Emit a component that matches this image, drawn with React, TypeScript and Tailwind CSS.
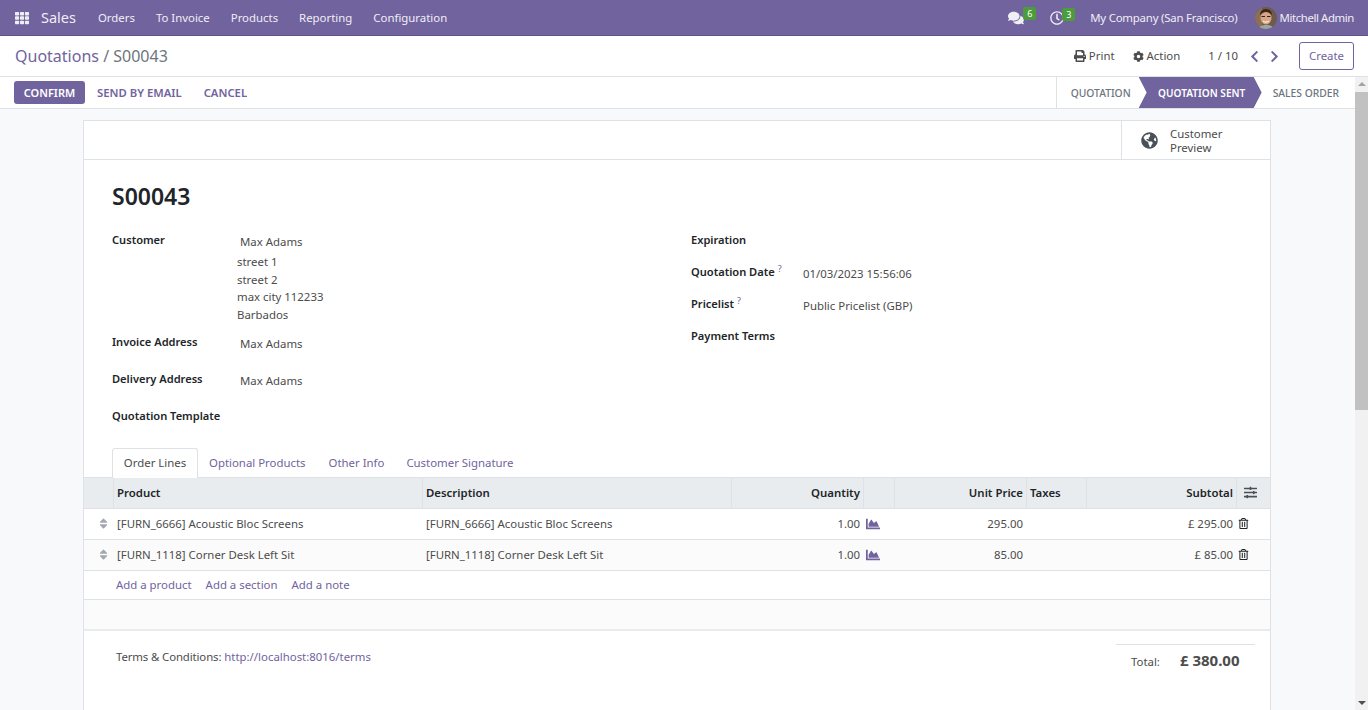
import { FaTh, FaComments, FaRegClock, FaPrint, FaCog, FaChevronLeft, FaChevronRight, FaGlobeAmericas, FaSort, FaChartArea, FaRegTrashAlt, FaSlidersH } from "react-icons/fa";

const MENU = ["Orders", "To Invoice", "Products", "Reporting", "Configuration"];

const LINES = [
  { code: "[FURN_6666] Acoustic Bloc Screens", price: "295.00", subtotal: "£ 295.00" },
  { code: "[FURN_1118] Corner Desk Left Sit", price: "85.00", subtotal: "£ 85.00" },
];

function Avatar() {
  return (
    <svg width="22" height="22" viewBox="0 0 22 22" className="rounded-full">
      <rect width="22" height="22" fill="#6d5a4a" />
      <rect x="0" y="0" width="7" height="22" fill="#8a6f55" />
      <ellipse cx="11" cy="11" rx="5.500" ry="6.500" fill="#d9a583" />
      <path d="M5 8c0-4 3-6 6-6s6 2 6 6c-2-2-4-3-6-3s-4 1-6 3z" fill="#3a2a20" />
      <path d="M6.500 9.500h3.500M12 9.500h3.500" stroke="#2b2320" strokeWidth="1" />
      <path d="M8 14c2 1.500 4 1.500 6 0" stroke="#fff" strokeWidth="1" fill="none" />
      <path d="M3 22c1-3 4-4 8-4s7 1 8 4z" fill="#9aa7a0" />
    </svg>
  );
}

function Field({ label, value, help, labelClass, className }: { label: string; value?: string; help?: boolean; labelClass: string; className?: string }) {
  return (
    <div className={`flex ${className ?? ""}`}>
      <div className={`whitespace-nowrap text-[11.100px] font-semibold text-[#212529] ${labelClass}`}>
        {label}
        {help && <sup className="ml-[3px] text-[9px] font-normal text-[#71639e]">?</sup>}
      </div>
      {value && <div className="pt-[2px] text-[#4c4c4c]">{value}</div>}
    </div>
  );
}

function Th({ className, children }: { className: string; children?: React.ReactNode }) {
  return <div className={`flex h-full items-center border-r border-[#dee2e6] font-semibold text-[#212529] ${className}`}>{children}</div>;
}

export default function App() {
  return (
    <div className="flex h-[710px] w-[1368px] flex-col overflow-hidden bg-white font-['Noto_Sans',sans-serif] text-[11.400px] leading-[18px] text-[#4c4c4c]">
      <header className="flex h-[36px] shrink-0 items-center border-b border-[#5f5389] bg-[#71639e] pl-[15px] pr-[14px] text-[#f0eef5]">
        <FaTh className="text-[14px]" />
        <span className="ml-[12px] text-[14.500px] leading-none">Sales</span>
        <nav className="ml-[22px] flex gap-[21px]">
          {MENU.map((m) => (
            <span key={m}>{m}</span>
          ))}
        </nav>
        <div className="ml-auto flex items-center">
          <span className="relative">
            <FaComments className="text-[16px]" />
            <span className="absolute -top-[3px] left-[15px] rounded-[2px] bg-[#4c9c3c] px-[4px] text-[9px] leading-[13px] text-white">6</span>
          </span>
          <span className="relative ml-[26px]">
            <FaRegClock className="text-[14px]" />
            <span className="absolute -top-[3px] left-[12px] rounded-[2px] bg-[#4c9c3c] px-[4px] text-[9px] leading-[13px] text-white">3</span>
          </span>
          <span className="ml-[26px] tracking-[-0.2px]">My Company (San Francisco)</span>
          <span className="ml-[17px] mr-[3px]"><Avatar /></span>
          <span className="tracking-[-0.4px]">Mitchell Admin</span>
        </div>
      </header>

      <div className="flex h-[41px] shrink-0 items-center border-b border-[#dee2e6] pl-[15px] pr-[14px]">
        <div className="text-[16px] text-[#71639e]">
          Quotations <span className="text-[#6c757d]">/ S00043</span>
        </div>
        <div className="ml-auto flex items-center">
          <FaPrint className="text-[12px]" />
          <span className="ml-[3px]">Print</span>
          <FaCog className="ml-[18px] text-[11px]" />
          <span className="ml-[3px]">Action</span>
          <span className="ml-[28px]">1 / 10</span>
          <FaChevronLeft className="ml-[10px] text-[13px] text-[#71639e]" />
          <FaChevronRight className="ml-[7px] text-[13px] text-[#71639e]" />
          <button className="ml-[18px] h-[28px] w-[55px] rounded-[3px] border border-[#71639e] text-[#71639e]">Create</button>
        </div>
      </div>

      <div className="flex min-h-0 flex-1">
        <main className="flex min-w-0 flex-1 flex-col bg-[#f8f9fb]">
          <div className="flex h-[32px] shrink-0 items-center border-b border-[#dee2e6] bg-white pl-[14px]">
            <button className="h-[23px] w-[71px] rounded-[3px] bg-[#71639e] text-[11px] font-semibold text-white">CONFIRM</button>
            <button className="ml-[12px] text-[11.300px] font-semibold text-[#71639e]">SEND BY EMAIL</button>
            <button className="ml-[22px] text-[11.300px] font-semibold text-[#71639e]">CANCEL</button>
            <div className="ml-auto flex h-full items-center text-[10.300px] font-medium text-[#6c757d]">
              <div className="flex h-full items-center border-l border-[#dee2e6] pl-[14px] pr-[8px]">QUOTATION</div>
              <div className="flex h-full w-[123px] items-center justify-center bg-[#71639e] pl-[3px] text-[10.100px] font-semibold text-white [clip-path:polygon(0_0,calc(100%-8px)_0,100%_50%,calc(100%-8px)_100%,0_100%,8px_50%)]">QUOTATION SENT</div>
              <div className="flex h-full items-center pl-[11px] pr-[16px]">SALES ORDER</div>
            </div>
          </div>

          <div className="flex min-h-0 flex-1 overflow-hidden pl-[83px] pt-[11px]">
            <section className="h-[640px] w-[1188px] shrink-0 border border-[#dee2e6] bg-white">
              <div className="flex h-[39px] justify-end border-b border-[#dee2e6]">
                <div className="flex w-[149px] items-center border-l border-[#dee2e6] pl-[19px]">
                  <FaGlobeAmericas className="text-[17px] text-[#495057]" />
                  <span className="ml-[12px] pt-[2px] leading-[14px]">Customer<br />Preview</span>
                </div>
              </div>

              <div className="px-[28px] pt-[20px]">
                <h1 className="text-[23px] font-semibold leading-[32px] text-[#212529]">S00043</h1>
                <div className="mt-[19px] flex">
                  <div className="w-[579px]">
                    <Field label="Customer" value="Max Adams" labelClass="w-[128px]" />
                    <div className="ml-[125px] mt-[2px] leading-[17.700px]">
                      street 1<br />street 2<br />max city 112233<br />Barbados
                    </div>
                    <Field label="Invoice Address" value="Max Adams" labelClass="w-[128px]" className="mt-[9px]" />
                    <Field label="Delivery Address" value="Max Adams" labelClass="w-[128px]" className="mt-[17px]" />
                    <Field label="Quotation Template" labelClass="w-[128px]" className="mt-[17px]" />
                  </div>
                  <div>
                    <Field label="Expiration" labelClass="w-[112px]" />
                    <Field label="Quotation Date" value="01/03/2023 15:56:06" help labelClass="w-[112px]" className="mt-[14px]" />
                    <Field label="Pricelist" value="Public Pricelist (GBP)" help labelClass="w-[112px]" className="mt-[12px]" />
                    <Field label="Payment Terms" labelClass="w-[112px]" className="mt-[12px]" />
                  </div>
                </div>
              </div>

              <div className="mt-[23px] flex h-[29px] items-stretch pl-[28px]">
                <div className="relative z-10 flex h-[30px] w-[86px] items-center justify-center rounded-t-[3px] border border-b-0 border-[#dee2e6] bg-white">Order Lines</div>
                <div className="flex items-center pl-[11px] pt-[2px] text-[#71639e]">Optional Products</div>
                <div className="flex items-center pl-[23px] pt-[2px] text-[#71639e]">Other Info</div>
                <div className="flex items-center pl-[22px] pt-[2px] text-[#71639e]">Customer Signature</div>
              </div>

              <div className="flex h-[32px] items-center border-y border-[#dee2e6] bg-[#e9ecef]">
                <Th className="w-[30px]" />
                <Th className="w-[309px] pl-[3px]">Product</Th>
                <Th className="w-[309px] pl-[3px]">Description</Th>
                <Th className="w-[132px] justify-end pr-[3px]">Quantity</Th>
                <Th className="w-[31px]" />
                <Th className="w-[132px] justify-end pr-[3px]">Unit Price</Th>
                <Th className="w-[60px] pl-[3px]">Taxes</Th>
                <Th className="w-[150px] justify-end pr-[3px]">Subtotal</Th>
                <div className="flex flex-1 justify-center pr-[6px] text-[#495057]"><FaSlidersH className="text-[13px]" /></div>
              </div>

              {LINES.map((l, i) => (
                <div key={l.code} className={`flex h-[31px] items-center border-b border-[#dee2e6] ${i === 1 ? "bg-[#fbfbfb]" : ""}`}>
                  <div className="flex w-[30px] justify-end pr-[4px] text-[#a3a8ae]"><FaSort className="text-[13px]" /></div>
                  <div className="w-[309px] pl-[3px]">{l.code}</div>
                  <div className="w-[309px] pl-[3px]">{l.code}</div>
                  <div className="w-[131px] pr-[3px] text-right">1.00</div>
                  <div className="w-[31px] pl-[3px] text-[#71639e]"><FaChartArea className="text-[14px]" /></div>
                  <div className="w-[132px] pr-[3px] text-right">{l.price}</div>
                  <div className="w-[60px]" />
                  <div className="w-[150px] pr-[3px] text-right">{l.subtotal}</div>
                  <div className="pl-[2px] text-[#212529]"><FaRegTrashAlt className="text-[11px]" /></div>
                </div>
              ))}

              <div className="flex h-[29px] items-center gap-[14px] border-b border-[#dee2e6] pl-[32px] text-[#71639e]">
                <span>Add a product</span>
                <span>Add a section</span>
                <span>Add a note</span>
              </div>
              <div className="h-[31px] border-b-2 border-[#e9ecef] bg-[#fbfbfb]" />

              <div className="flex pl-[32px] pr-[15px] pt-[13px]">
                <div className="pt-[4px]">
                  <span className="tracking-[-0.12px]">Terms &amp; Conditions:</span> <span className="text-[#71639e]">http://localhost:8016/terms</span>
                </div>
                <div className="ml-auto flex h-[34px] w-[139px] items-center border-t border-[#dee2e6] pt-[1px]">
                  <span className="ml-[15px]">Total:</span>
                  <span className="ml-[20px] mb-[4px] text-[15px] font-bold">£ 380.00</span>
                </div>
              </div>
            </section>
          </div>
        </main>

        <div className="flex w-[13px] shrink-0 flex-col items-center bg-[#f1f1f1]">
          <div className="mt-[5px] h-0 w-0 border-x-[4px] border-b-[4px] border-x-transparent border-b-[#a3a3a3]" />
          <div className="mt-[6px] h-[318px] w-full bg-[#c1c1c1]" />
          <div className="mt-auto mb-[5px] h-0 w-0 border-x-[4px] border-t-[4px] border-x-transparent border-t-[#505050]" />
        </div>
      </div>
    </div>
  );
}
